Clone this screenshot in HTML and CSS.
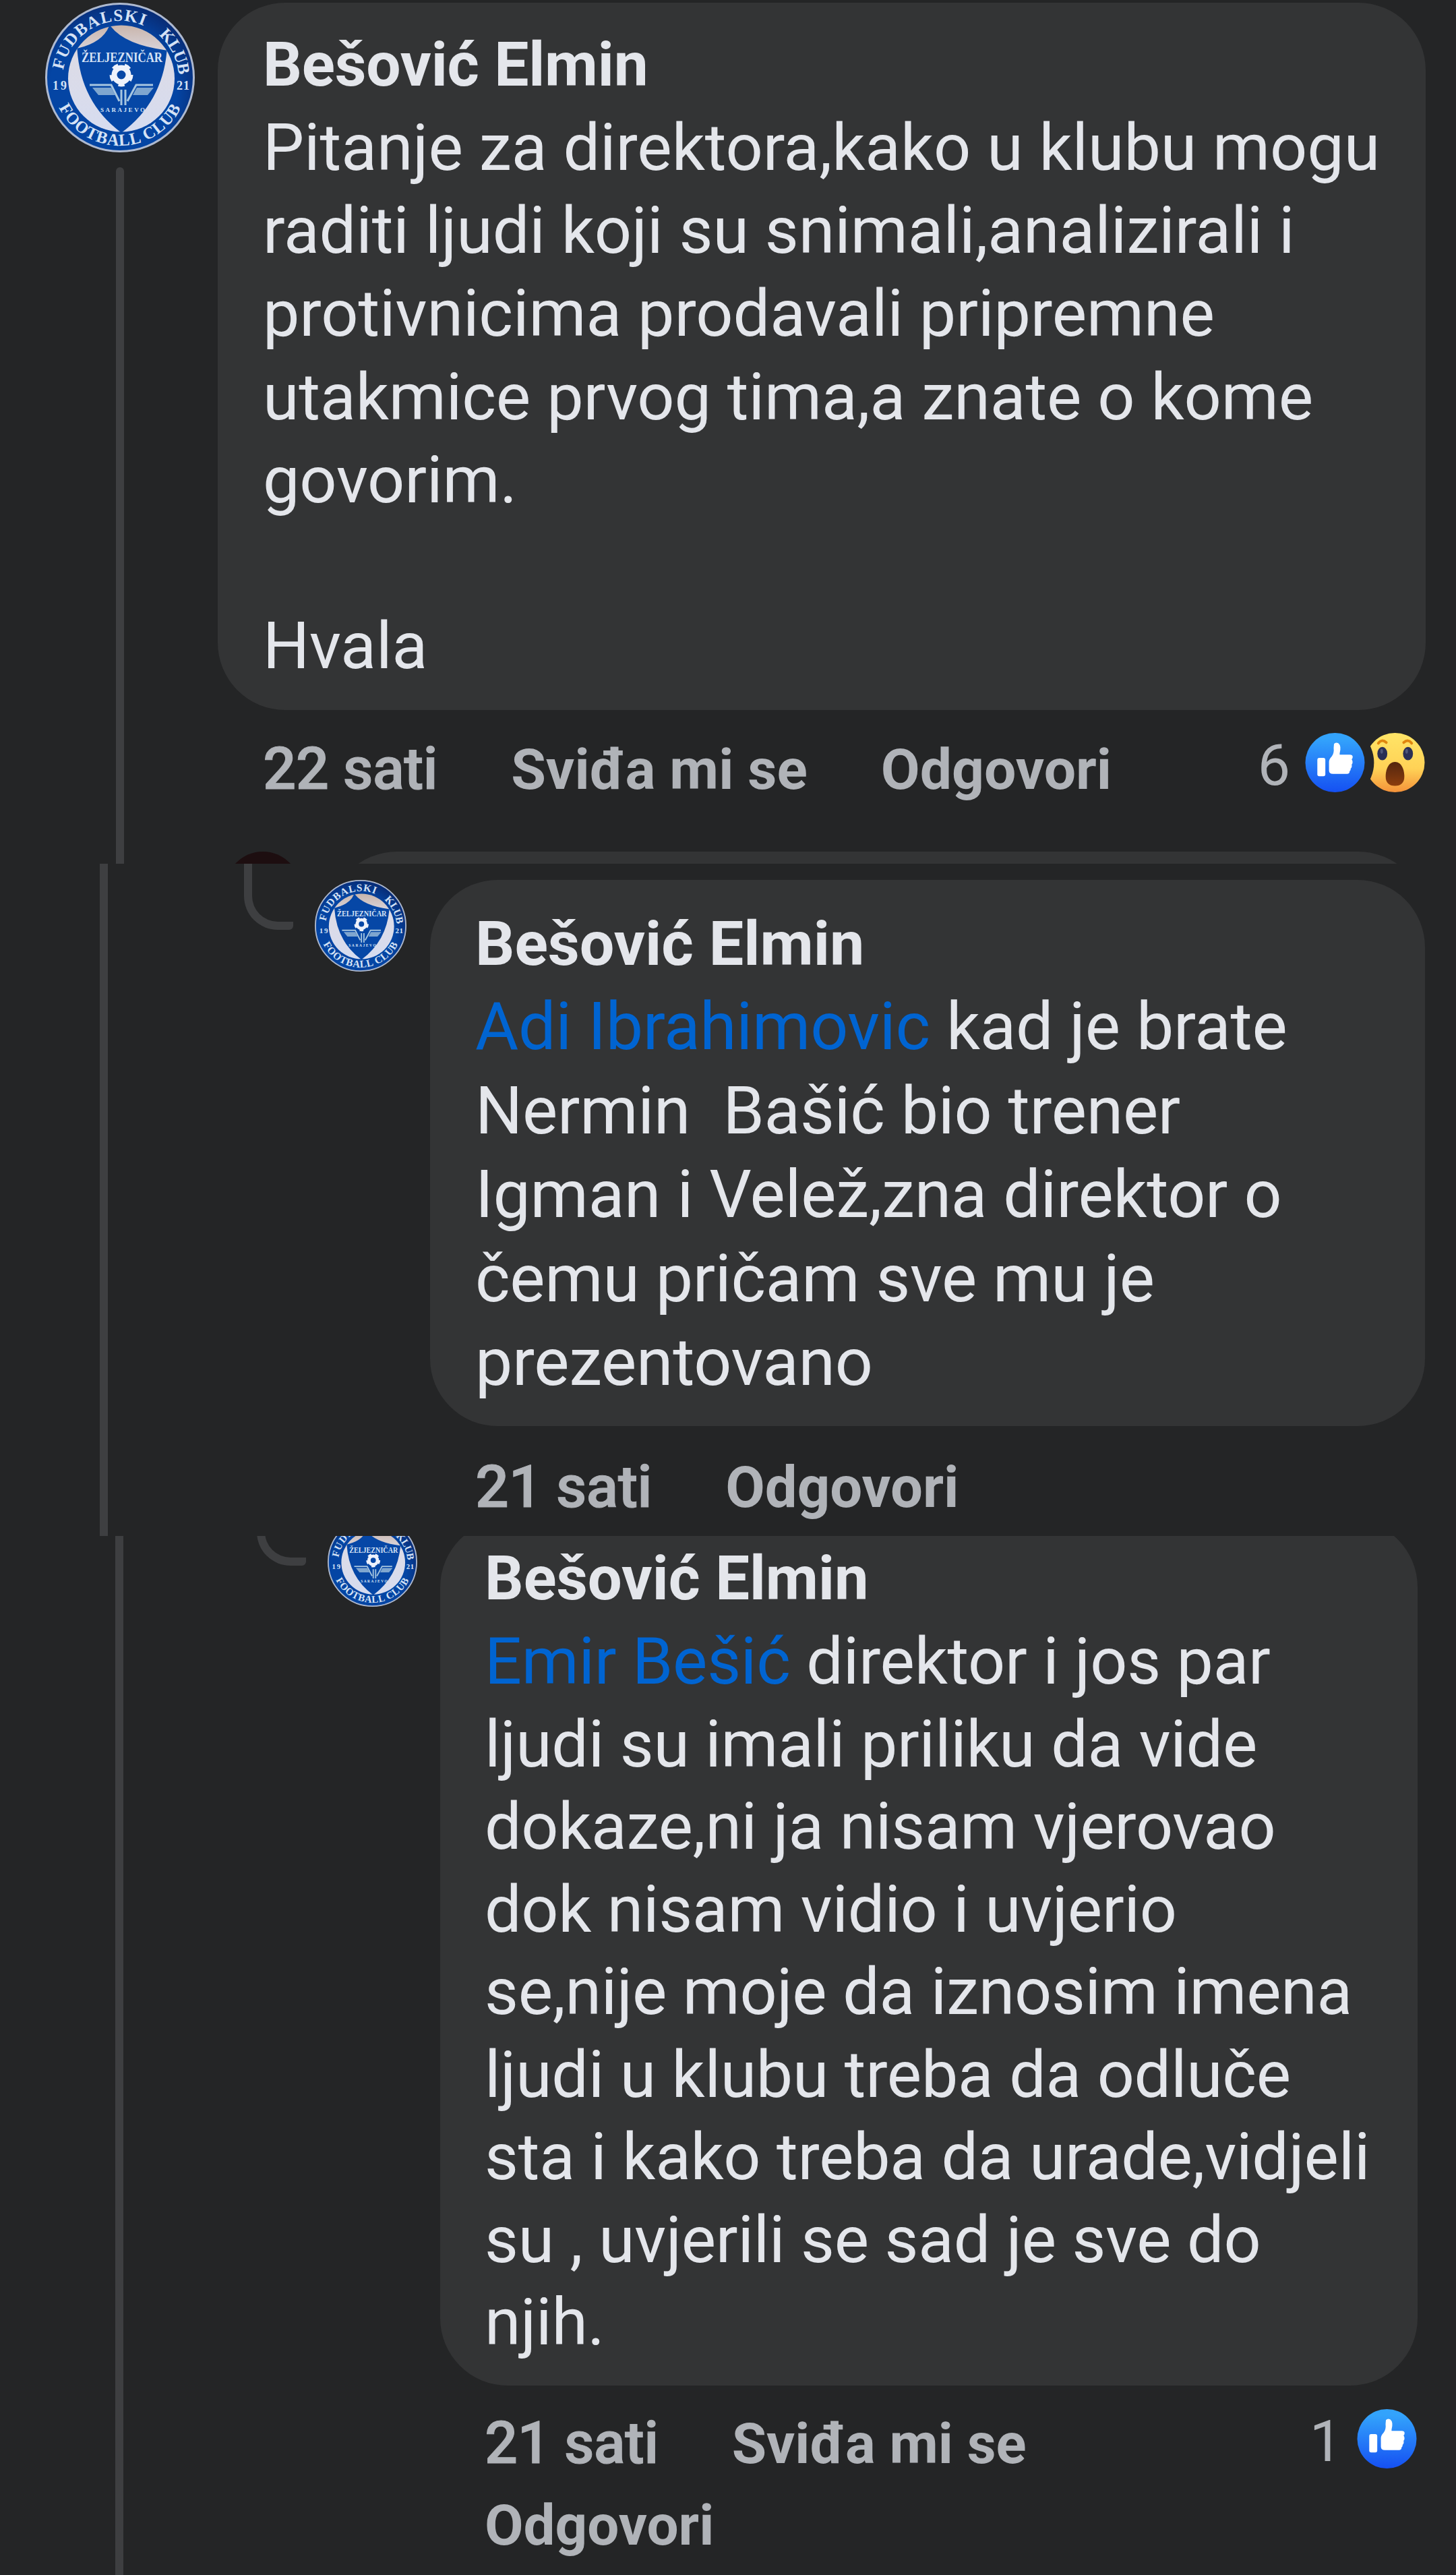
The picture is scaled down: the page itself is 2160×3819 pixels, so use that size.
FILE: index.html
```
<!DOCTYPE html>
<html lang="bs">
<head>
    <meta charset="UTF-8">
    <title>Komentari</title>
    <link rel="stylesheet" href="styles.css">
</head>
<body>
    <svg class="defs" width="0" height="0">
        <defs>
            <linearGradient id="like-bg" x1="0" y1="0" x2="0" y2="1">
                <stop offset="0.1" stop-color="#33a3fc"/>
                <stop offset="1" stop-color="#1550f2"/>
            </linearGradient>
            <linearGradient id="wow-bg" x1="0" y1="0" x2="0" y2="1">
                <stop offset="0" stop-color="#ffe567"/>
                <stop offset="0.6" stop-color="#ffd256"/>
                <stop offset="1" stop-color="#f4923a"/>
            </linearGradient>
            <linearGradient id="wow-mouth" x1="0" y1="0" x2="0" y2="1">
                <stop offset="0" stop-color="#53260f"/>
                <stop offset="1" stop-color="#8c3d0d"/>
            </linearGradient>
            <linearGradient id="cream" x1="0" y1="0" x2="0" y2="1">
                <stop offset="0" stop-color="#c9b5ab"/>
                <stop offset="0.3" stop-color="#dcdbe6"/>
                <stop offset="1" stop-color="#d6dcf0"/>
            </linearGradient>
            <radialGradient id="crest-bg" cx="0.45" cy="0.6" r="0.62">
                <stop offset="0.7" stop-color="#0445a4"/>
                <stop offset="1" stop-color="#082a72"/>
            </radialGradient>
            <path id="arc-top" d="M26 113A86 86 0 0 1 198 113V140"/>
            <path id="arc-bottom" d="M10 111A101 101 0 0 0 212 111"/>
            <mask id="wow-cut">
                <rect width="90" height="90" fill="#fff"/>
                <circle cx="-43.5" cy="45" r="57" fill="#000"/>
            </mask>

            <!-- grb kluba -->
            <symbol id="crest" viewBox="0 0 222 222">
                <circle cx="111" cy="111" r="109.5" fill="url(#crest-bg)" stroke="#aeb9cf" stroke-width="3"/>
                <circle cx="113" cy="112.5" r="79" fill="url(#cream)"/>
                <path d="M96 36Q86 60 49 69Q54 147 113 191Q172 147 179 72Q118 64 96 36Z" fill="#0647a6" stroke="#0647a6" stroke-width="3"/>
                <g class="crest-text">
                    <text font-size="25" letter-spacing="1.4"><textPath href="#arc-top" startOffset="13">FUDBALSKI</textPath></text>
                    <text font-size="25" letter-spacing="-1"><textPath href="#arc-top" startOffset="196">KLUB</textPath></text>
                    <text font-size="25" letter-spacing="0.9"><textPath href="#arc-bottom" startOffset="46">FOOTBALL CLUB</textPath></text>
                    <text x="54" y="88" font-size="20" textLength="120" lengthAdjust="spacingAndGlyphs">ŽELJEZNIČAR</text>
                    <text x="11" y="129" font-size="18" textLength="21">19</text>
                    <text x="195" y="129" font-size="18" textLength="19">21</text>
                    <text x="82" y="162" font-size="9" textLength="66">SARAJEVO</text>
                </g>
                <circle cx="113" cy="107" r="10.5" fill="none" stroke="#eef2fb" stroke-width="8"/>
                <circle cx="113" cy="107" r="15" fill="none" stroke="#eef2fb" stroke-width="5" stroke-dasharray="9 9.8"/>
                <path d="M66 122H98L110 146M160 122H135L122 146M113 129V152M119 129V152" fill="none" stroke="#a7c6e0" stroke-width="3"/>
                <path d="M70 126H98L104 137H79ZM161 126H136L130 137H152Z" fill="#7fa6cf"/>
            </symbol>

            <symbol id="like" viewBox="0 0 90 90">
                <circle cx="45" cy="45" r="44.5" fill="url(#like-bg)"/>
                <rect x="18.5" y="38" width="12" height="27.5" rx="3" fill="#fff"/>
                <path d="M43.5 17Q46 14 50 16Q55 20 52 31V33H67Q72 33 71.5 37Q71.5 39 70 40Q73 45 70 48Q71 52 68.5 54Q69 57 67 58Q67 62 63 62H42Q36 62 36 57V44Q36 40 40 36Q44 31 43 23Z" fill="#fff"/>
            </symbol>

            <symbol id="wow" viewBox="0 0 90 90">
                <g mask="url(#wow-cut)">
                    <circle cx="45" cy="45" r="44.5" fill="url(#wow-bg)"/>
                    <path d="M20 16Q25 9 32 15M58 15Q65 9 70 16" fill="none" stroke="#e0870f" stroke-width="4" stroke-linecap="round"/>
                    <ellipse cx="26" cy="31.5" rx="7.5" ry="10" fill="#2b2f55"/>
                    <ellipse cx="64.5" cy="31.5" rx="7.5" ry="10" fill="#2b2f55"/>
                    <ellipse cx="25" cy="28" rx="2" ry="3.5" fill="#50577a"/>
                    <ellipse cx="62.5" cy="28" rx="2" ry="3.5" fill="#50577a"/>
                    <path d="M45 44C55 44 59 56 59 66C59 75 54 80 45 80C36 80 31 75 31 66C31 56 35 44 45 44Z" fill="url(#wow-mouth)"/>
                </g>
            </symbol>
        </defs>
    </svg>

    <main class="thread">
        <section class="part part-one">
            <div class="side">
                <svg class="avatar"><use href="#crest"/></svg>
                <div class="line"></div>
            </div>
            <div class="content">
                <article class="bubble">
                    <h2 class="name">Bešović Elmin</h2>
                    <p class="text">Pitanje za direktora,kako u klubu mogu<br>raditi ljudi koji su snimali,analizirali i<br>protivnicima prodavali pripremne<br>utakmice prvog tima,a znate o kome<br>govorim.<br><br>Hvala</p>
                </article>
                <div class="actions">
                    <div class="links">
                        <span>22 sati</span>
                        <a>Sviđa mi se</a>
                        <a>Odgovori</a>
                    </div>
                    <div class="reactions">
                        <span>6</span>
                        <svg class="icon"><use href="#like"/></svg>
                        <svg class="icon"><use href="#wow"/></svg>
                    </div>
                </div>
                <div class="peek">
                    <div class="peek-avatar"></div>
                    <div class="peek-bubble"></div>
                </div>
            </div>
        </section>

        <section class="part part-two">
            <div class="line"></div>
            <div class="elbow"></div>
            <svg class="avatar"><use href="#crest"/></svg>
            <div class="content">
                <article class="bubble">
                    <h2 class="name">Bešović Elmin</h2>
                    <p class="text"><a>Adi Ibrahimovic</a> kad je brate<br>Nermin&nbsp; Bašić bio trener<br>Igman i Velež,zna direktor o<br>čemu pričam sve mu je<br>prezentovano</p>
                </article>
                <div class="actions">
                    <div class="links">
                        <span>21 sati</span>
                        <a>Odgovori</a>
                    </div>
                </div>
            </div>
        </section>

        <section class="part part-three">
            <div class="line"></div>
            <div class="elbow"></div>
            <svg class="avatar"><use href="#crest"/></svg>
            <div class="content">
                <article class="bubble">
                    <h2 class="name">Bešović Elmin</h2>
                    <p class="text"><a>Emir Bešić</a> direktor i jos par<br>ljudi su imali priliku da vide<br>dokaze,ni ja nisam vjerovao<br>dok nisam vidio i uvjerio<br>se,nije moje da iznosim imena<br>ljudi u klubu treba da odluče<br>sta i kako treba da urade,vidjeli<br>su , uvjerili se sad je sve do<br>njih.</p>
                </article>
                <div class="actions">
                    <div class="links">
                        <span>21 sati</span>
                        <a>Sviđa mi se</a>
                        <a>Odgovori</a>
                    </div>
                    <div class="reactions">
                        <span>1</span>
                        <svg class="icon"><use href="#like"/></svg>
                    </div>
                </div>
            </div>
        </section>
    </main>
</body>
</html>
```

FILE: styles.css
```
:root {
    --bg: #242526;
    --bubble: #333435;
    --line: #3e3f41;
    --text: #e4e6eb;
    --muted: #b0b3b8;
    --link: #0064d1;
}

* {
    box-sizing: border-box;
}

body {
    margin: 0;
    background: var(--bg);
    color: var(--text);
    font-family: Roboto, "Liberation Sans", sans-serif;
}

.defs {
    position: absolute;
}

.crest-text {
    font-family: "Liberation Serif", serif;
    font-weight: bold;
    fill: #d5e2f5;
}

.thread {
    width: 2160px;
    height: 3819px;
    overflow: hidden;
}

.part {
    display: flex;
    align-items: flex-start;
    overflow: hidden;
}

.line {
    flex: none;
    width: 12px;
    background: var(--line);
}

.avatar {
    display: block;
    flex: none;
}

.content {
    flex: none;
}

.bubble {
    background: var(--bubble);
    border-radius: 100px;
    white-space: nowrap;
}

.name,
.text {
    margin: 0;
}

.name {
    font-size: 91px;
    font-weight: 700;
    line-height: 123px;
    letter-spacing: -0.2px;
}

.text {
    font-size: 97px;
    line-height: 123.2px;
    letter-spacing: -0.1px;
}

.text a {
    color: var(--link);
}

.actions {
    display: flex;
    align-items: flex-start;
    color: var(--muted);
    font-size: 84px;
    font-weight: 700;
    white-space: nowrap;
}

.links {
    display: flex;
    align-items: baseline;
    gap: 109px;
}

.links span {
    font-size: 87px;
    font-weight: 500;
    letter-spacing: -0.6px;
    -webkit-text-stroke: 1px var(--muted);
}

.reactions {
    display: flex;
    margin-left: auto;
    padding-right: 1px;
    font-size: 86px;
    font-weight: 400;
    line-height: 97px;
}

.reactions span {
    margin-right: 22px;
}

.icon {
    width: 89px;
    height: 90px;
}

.elbow {
    flex: none;
    border: solid var(--line);
    border-width: 0 0 12px 12px;
    border-radius: 0 6px 6px 50px;
}

/* prvi komentar */
.part-one {
    height: 1281px;
    padding-top: 4px;
}

.part-one .side {
    display: flex;
    flex: none;
    flex-direction: column;
    align-items: center;
    width: 323px;
    height: 1277px;
    padding-right: 34px;
    padding-left: 67px;
}

.part-one .side .line {
    flex: 1;
    margin-top: 22px;
    border-radius: 6px 6px 0 0;
}

.part-one .avatar {
    width: 222px;
    height: 222px;
}

.part-one .bubble {
    width: 1792px;
    height: 1049px;
    padding: 31px 0 0 67px;
}

.part-one .actions {
    width: 1792px;
    height: 210px;
    padding: 33px 0 0 67px;
    line-height: 108px;
}

.peek {
    display: flex;
    gap: 43px;
    margin-left: 11px;
}

.peek-avatar {
    width: 112px;
    height: 112px;
    background: #1d0e10;
    border-radius: 50%;
}

.peek-bubble {
    width: 1626px;
    height: 200px;
    background: var(--bubble);
    border-radius: 100px;
}

/* odgovori */
.part-two {
    height: 997px;
    padding-left: 148px;
}

.part-two .line {
    height: 997px;
}

.part-two .elbow {
    width: 73px;
    height: 98px;
    margin-left: 202px;
}

.part-two .avatar {
    width: 136px;
    height: 136px;
    margin: 24px 35px 0 32px;
}

.part-two .bubble {
    width: 1476px;
    height: 810px;
    margin-top: 24px;
    padding: 33px 0 0 67px;
}

.part-two .name {
    font-size: 91.5px;
    letter-spacing: 0;
}

.part-two .text {
    font-size: 98.5px;
    line-height: 124.6px;
    letter-spacing: -0.25px;
}

.part-two .actions {
    padding: 35px 0 0 67px;
    font-size: 85px;
    line-height: 110px;
}

.part-two .links span {
    font-size: 88px;
}

.part-three {
    height: 1541px;
    padding-left: 171px;
}

.part-three .line {
    height: 1541px;
}

.part-three .elbow {
    width: 73px;
    height: 84px;
    margin-top: -40px;
    margin-left: 198px;
}

.part-three .avatar {
    width: 133px;
    height: 133px;
    margin: -28px 34px 0 32px;
}

.part-three .bubble {
    width: 1450px;
    height: 1284px;
    margin-top: -24px;
    padding: 26px 0 0 66px;
}

.part-three .name {
    font-size: 90.3px;
    letter-spacing: 0;
}

.part-three .text {
    font-size: 96.8px;
    line-height: 122.5px;
    letter-spacing: -0.25px;
}

.part-three .actions {
    width: 1450px;
    padding: 26px 0 0 66px;
    font-size: 83.5px;
    line-height: 120.5px;
}

.part-three .links {
    flex-wrap: wrap;
    gap: 0 109px;
    width: 900px;
}

.part-three .links span {
    font-size: 86.5px;
}

.part-three .reactions {
    padding-top: 8px;
}
```
